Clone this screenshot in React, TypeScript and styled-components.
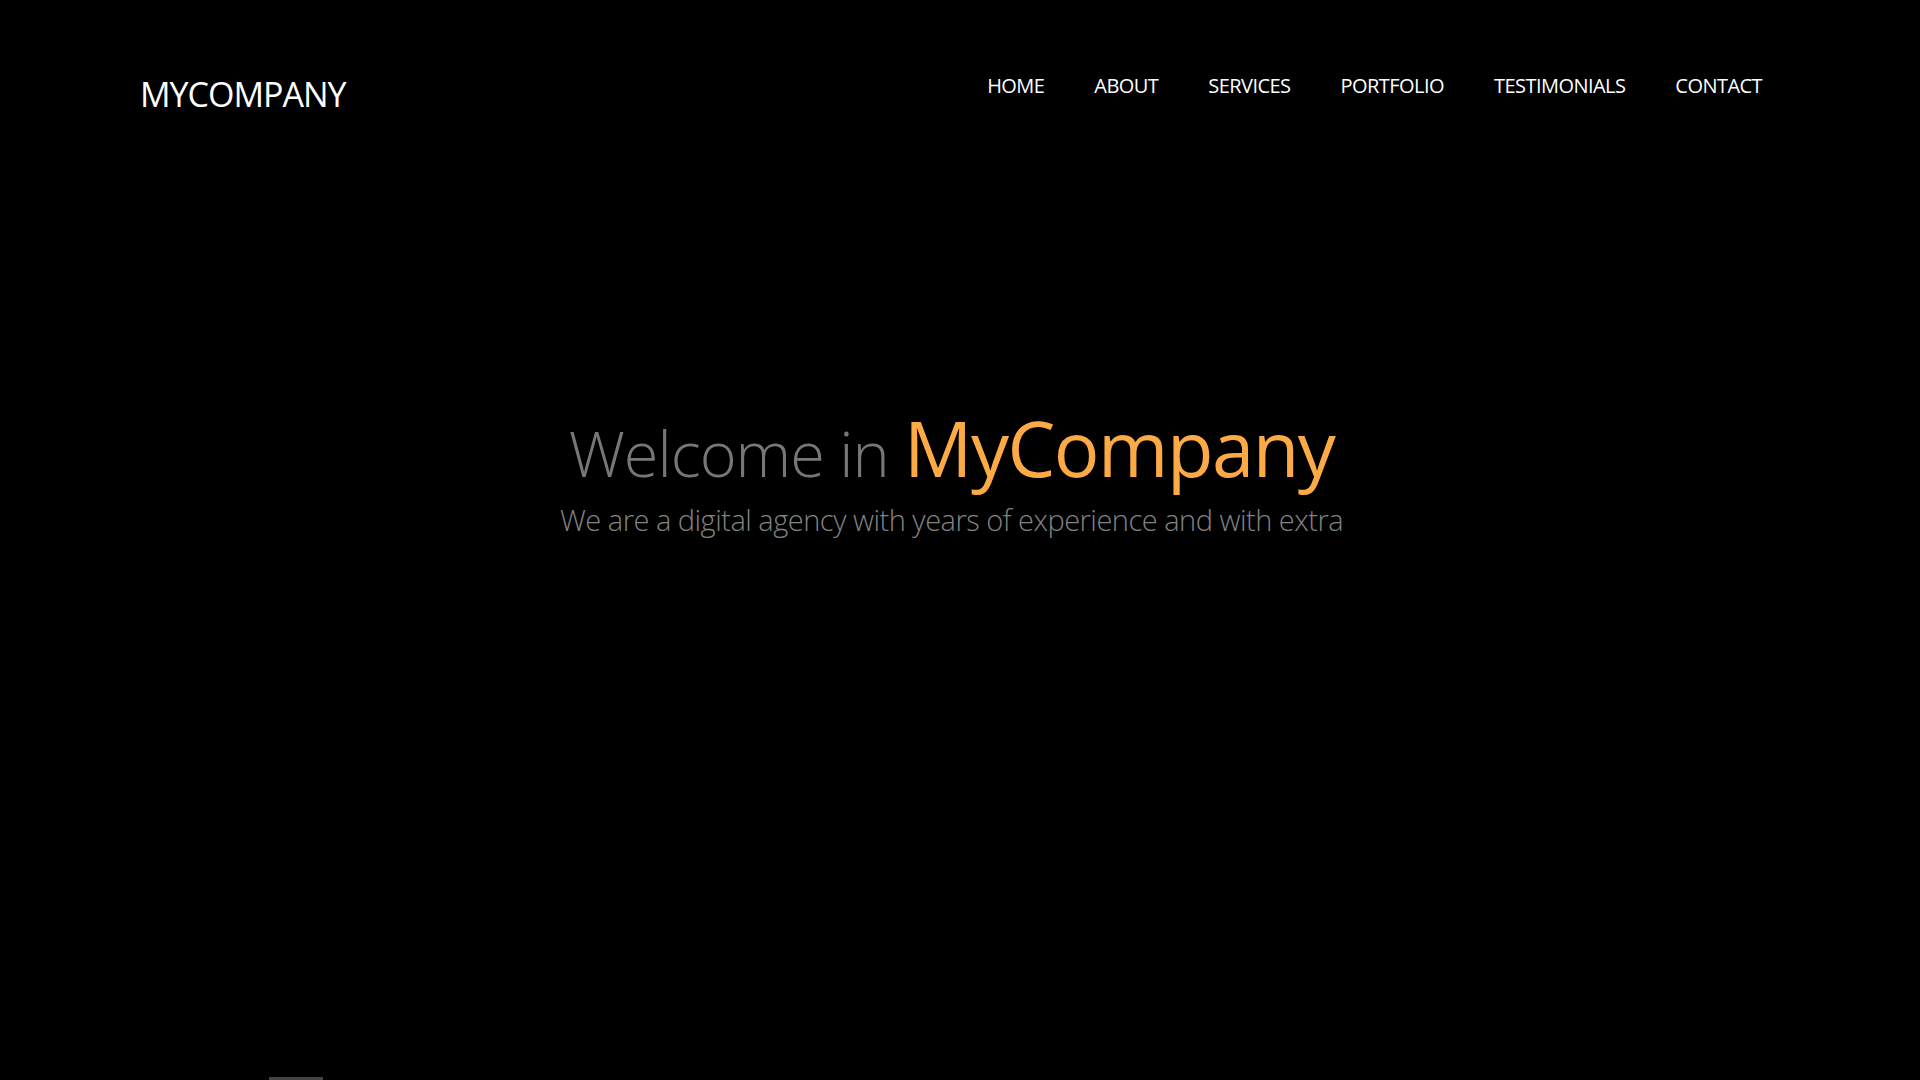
import styled, { createGlobalStyle } from 'styled-components'

const GlobalStyle = createGlobalStyle`
  html, body {
    margin: 0;
    padding: 0;
    background: #000;
  }

  body {
    font-family: 'Open Sans', 'Liberation Sans', sans-serif;
    color: #fff;
  }
`

const Page = styled.div`
  display: flex;
  flex-flow: column nowrap;
  height: 100vh;
  overflow: hidden;
  background: #000;
`

const Header = styled.header`
  display: flex;
  align-items: flex-start;
  justify-content: space-between;
  padding: 72px 158px 0 140px;
`

const Logo = styled.a`
  font-size: 34px;
  font-weight: 400;
  letter-spacing: -1px;
  color: #fff;
  text-decoration: none;
  line-height: 44px;
`

const Nav = styled.nav`
  display: flex;
  column-gap: 50px;
`

const NavLink = styled.a`
  font-size: 20px;
  font-weight: 500;
  letter-spacing: -0.55px;
  color: #fff;
  text-decoration: none;
  line-height: 28px;
`

const Hero = styled.section`
  flex: 1;
  display: flex;
  flex-flow: column nowrap;
  align-items: center;
  justify-content: center;
  padding: 0 17px 246px 0;
`

const Title = styled.h1`
  margin: 0;
  font-weight: 300;
  line-height: 1;
  white-space: nowrap;
`

const Welcome = styled.span`
  font-size: 63px;
  color: #777;
  letter-spacing: -1px;
`

const Brand = styled.span`
  font-size: 76px;
  font-weight: 400;
  color: #fbaa45;
  letter-spacing: -1.5px;
`

const Subtitle = styled.p`
  margin: 17px 0 0;
  font-size: 29px;
  font-weight: 300;
  line-height: 1.2;
  color: #828282;
  letter-spacing: -0.5px;
`

const Footer = styled.div`
  display: flex;
  padding-left: 269px;
`

const ScrollBar = styled.div`
  width: 54px;
  height: 3px;
  background: #444;
`

const links = ['HOME', 'ABOUT', 'SERVICES', 'PORTFOLIO', 'TESTIMONIALS', 'CONTACT']

export default function App() {
  return (
    <>
      <GlobalStyle />
      <Page>
        <Header>
          <Logo href="#">MYCOMPANY</Logo>
          <Nav>
            {links.map((l) => (
              <NavLink key={l} href="#">{l}</NavLink>
            ))}
          </Nav>
        </Header>
        <Hero>
          <Title>
            <Welcome>Welcome in </Welcome>
            <Brand>MyCompany</Brand>
          </Title>
          <Subtitle>We are a digital agency with years of experience and with extra</Subtitle>
        </Hero>
        <Footer>
          <ScrollBar />
        </Footer>
      </Page>
    </>
  )
}
